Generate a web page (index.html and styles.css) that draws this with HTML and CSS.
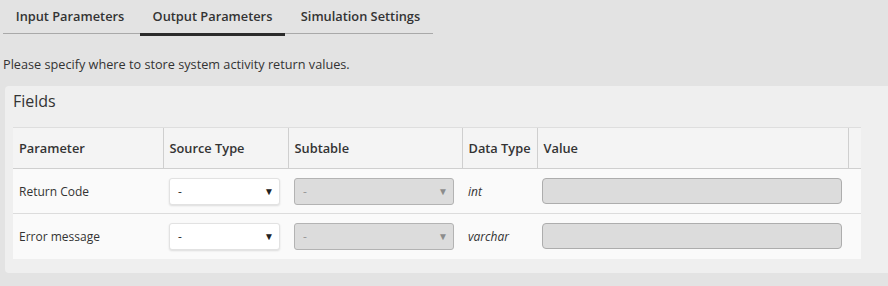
FILE: index.html
```html
<!DOCTYPE html>
<html lang="en">
<head>
    <meta charset="UTF-8">
    <title>Output Parameters</title>
    <link rel="stylesheet" href="styles.css">
</head>
<body>
    <div class="page">
        <div class="tabs">
            <div class="tab tab-input">Input Parameters</div>
            <div class="tab tab-output active">Output Parameters</div>
            <div class="tab tab-sim">Simulation Settings</div>
        </div>

        <p class="hint">Please specify where to store system activity return values.</p>

        <div class="panel">
            <div class="panel-title">Fields</div>
            <table class="fields">
                <colgroup>
                    <col class="col-param">
                    <col class="col-source">
                    <col class="col-sub">
                    <col class="col-type">
                    <col class="col-value">
                    <col class="col-scroll">
                </colgroup>
                <thead>
                    <tr>
                        <th>Parameter</th>
                        <th>Source Type</th>
                        <th>Subtable</th>
                        <th>Data Type</th>
                        <th>Value</th>
                        <th></th>
                    </tr>
                </thead>
                <tbody>
                    <tr>
                        <td>Return Code</td>
                        <td><div class="select source"><span>-</span><span class="arrow">&#9660;</span></div></td>
                        <td><div class="select sub disabled"><span>-</span><span class="arrow">&#9660;</span></div></td>
                        <td class="type">int</td>
                        <td><div class="value-input"></div></td>
                        <td></td>
                    </tr>
                    <tr>
                        <td>Error message</td>
                        <td><div class="select source"><span>-</span><span class="arrow">&#9660;</span></div></td>
                        <td><div class="select sub disabled"><span>-</span><span class="arrow">&#9660;</span></div></td>
                        <td class="type">varchar</td>
                        <td><div class="value-input"></div></td>
                        <td></td>
                    </tr>
                </tbody>
            </table>
        </div>
    </div>
</body>
</html>
```

FILE: styles.css
```css
body {
    margin: 0;
    background: #e3e3e3;
    font-family: "Open Sans", "Liberation Sans", sans-serif;
    color: #333;
    overflow: hidden;
}

.page {
    padding: 0 0 0 3px;
}

/* Tabs */
.tabs {
    display: flex;
    width: 430px;
    border-bottom: 1px solid #a9a9a9;
    height: 34px;
    box-sizing: border-box;
}

.tab {
    font-size: 12.8px;
    font-weight: 600;
    line-height: 32px;
    color: #333;
    white-space: nowrap;
    text-align: center;
    box-sizing: border-box;
    height: 34px;
}

.tab-input { width: 137px; padding-right: 3px; }
.tab-output { width: 145px; }
.tab-sim { width: 148px; padding-left: 3px; }

.tab.active {
    border-bottom: 3px solid #2b2b2b;
    height: 36px;
}

.hint {
    margin: 21px 0 0;
    font-size: 12.7px;
    line-height: 18px;
}

/* Panel */
.panel {
    margin: 13px 0 0 2px;
    width: 900px;
    background: #efefef;
    border-radius: 4px;
    padding: 4px 8px 14px;
    box-sizing: border-box;
}

.panel-title {
    font-size: 16px;
    line-height: 22px;
    margin-bottom: 15px;
}

/* Table */
.fields {
    width: 848px;
    border-collapse: collapse;
    table-layout: fixed;
    font-size: 12px;
}

.col-param { width: 150px; }
.col-source { width: 125px; }
.col-sub { width: 174px; }
.col-type { width: 75px; }
.col-value { width: 311px; }
.col-scroll { width: 13px; }

.fields th {
    background: #f4f4f4;
    height: 41px;
    text-align: left;
    font-size: 12.8px;
    font-weight: 600;
    padding: 0 6px;
    white-space: nowrap;
    border-top: 1px solid #dedede;
    border-bottom: 1px solid #cfcfcf;
    border-left: 1px solid #cfcfcf;
    box-sizing: border-box;
}

.fields th:first-child {
    border-left: none;
}

.fields td {
    background: #fafafa;
    height: 45px;
    padding: 0 6px;
    border-bottom: 1px solid #dcdcdc;
    box-sizing: border-box;
}

.fields tbody tr:last-child td {
    border-bottom: none;
}

.type {
    font-style: italic;
}

/* Form controls */
.select {
    display: flex;
    justify-content: space-between;
    align-items: center;
    height: 27px;
    box-sizing: border-box;
    padding: 0 5px 0 8px;
    border-radius: 3px;
    font-size: 12px;
}

.select .arrow {
    font-size: 10px;
    color: #222;
}

.select.source {
    width: 111px;
    background: #fff;
    border: 1px solid #e2e2e2;
    box-shadow: 0 1px 2px rgba(0, 0, 0, 0.12);
}

.select.sub {
    width: 160px;
}

.select.disabled {
    background: #dcdcdc;
    border: 1px solid #b3b3b3;
    color: #999;
}

.select.disabled .arrow {
    color: #8c8c8c;
}

.value-input {
    width: 300px;
    height: 26px;
    margin-left: -1px;
    box-sizing: border-box;
    background: #dcdcdc;
    border: 1px solid #adadad;
    border-radius: 4px;
}
```
